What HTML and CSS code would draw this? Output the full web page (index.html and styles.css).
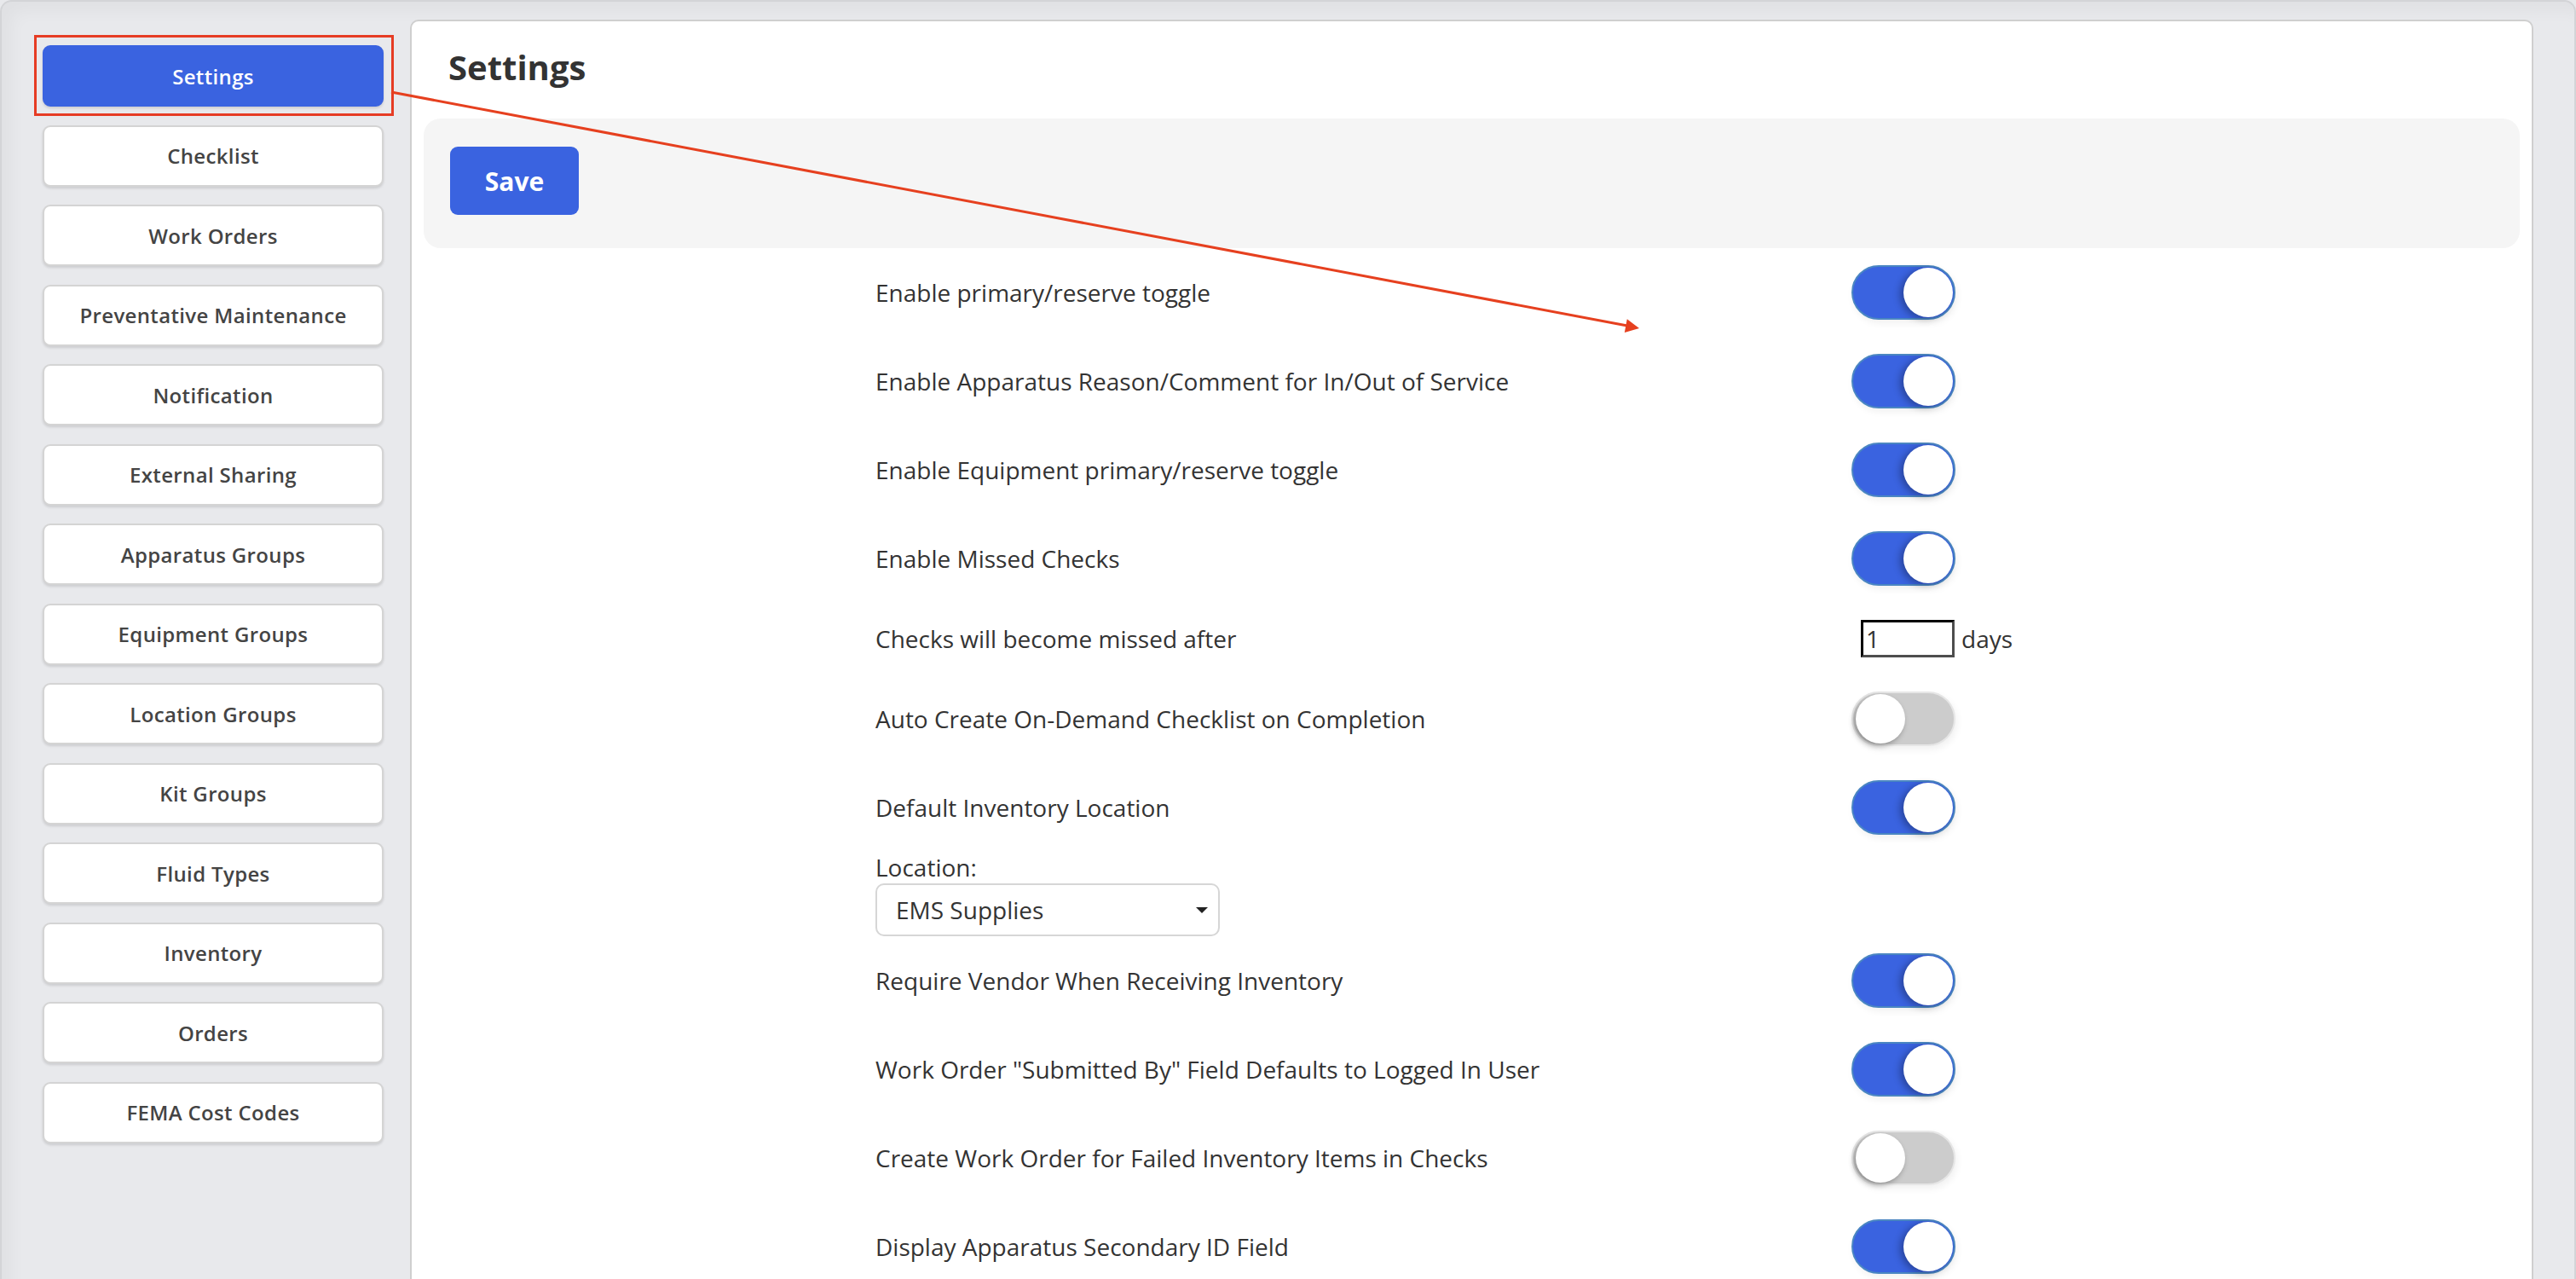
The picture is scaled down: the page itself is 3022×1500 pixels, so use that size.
FILE: index.html
```html
<!DOCTYPE html>
<html lang="en">
<head>
<meta charset="utf-8">
<title>Settings</title>
<link rel="stylesheet" href="styles.css">
</head>
<body>
<div class="app">
  <aside class="sidebar">
    <button class="nav-btn active">Settings</button>
    <button class="nav-btn">Checklist</button>
    <button class="nav-btn">Work Orders</button>
    <button class="nav-btn">Preventative Maintenance</button>
    <button class="nav-btn">Notification</button>
    <button class="nav-btn">External Sharing</button>
    <button class="nav-btn">Apparatus Groups</button>
    <button class="nav-btn">Equipment Groups</button>
    <button class="nav-btn">Location Groups</button>
    <button class="nav-btn">Kit Groups</button>
    <button class="nav-btn">Fluid Types</button>
    <button class="nav-btn">Inventory</button>
    <button class="nav-btn">Orders</button>
    <button class="nav-btn">FEMA Cost Codes</button>
  </aside>
  <main class="card">
    <h1 class="title">Settings</h1>
    <div class="toolbar">
      <button class="save">Save</button>
    </div>
    <div class="settings">
      <div class="row"><span class="label">Enable primary/reserve toggle</span><span class="toggle on"></span></div>
      <div class="row"><span class="label">Enable Apparatus Reason/Comment for In/Out of Service</span><span class="toggle on"></span></div>
      <div class="row"><span class="label">Enable Equipment primary/reserve toggle</span><span class="toggle on"></span></div>
      <div class="row"><span class="label">Enable Missed Checks</span><span class="toggle on"></span></div>
      <div class="row row-input"><span class="label">Checks will become missed after</span><span class="days"><input class="num" type="text" value="1"><span class="unit">days</span></span></div>
      <div class="row"><span class="label">Auto Create On-Demand Checklist on Completion</span><span class="toggle"></span></div>
      <div class="row"><span class="label">Default Inventory Location</span><span class="toggle on"></span></div>
      <div class="location">
        <div class="loc-label">Location:</div>
        <div class="select"><span>EMS Supplies</span><span class="caret"></span></div>
      </div>
      <div class="row"><span class="label">Require Vendor When Receiving Inventory</span><span class="toggle on"></span></div>
      <div class="row"><span class="label">Work Order "Submitted By" Field Defaults to Logged In User</span><span class="toggle on"></span></div>
      <div class="row"><span class="label">Create Work Order for Failed Inventory Items in Checks</span><span class="toggle"></span></div>
      <div class="row"><span class="label">Display Apparatus Secondary ID Field</span><span class="toggle on"></span></div>
    </div>
  </main>
</div>
<div class="annot-box"></div>
<svg class="annot-arrow" width="3022" height="1500" viewBox="0 0 3022 1500">
  <line x1="459" y1="108" x2="1909" y2="382" stroke="#e6401f" stroke-width="3"/>
  <polygon points="1923,385 1905.8,390 1908.8,374.2" fill="#e6401f"/>
</svg>
</body>
</html>
```

FILE: styles.css
```css
html, body {
  margin: 0;
  padding: 0;
  height: 1500px;
  overflow: hidden;
  background: #e8e9ec;
  font-family: "Open Sans", "Liberation Sans", sans-serif;
}

.app {
  display: flex;
  align-items: flex-start;
  min-height: 1600px;
  border: 2px solid #d3d4d7;
  border-bottom: none;
  border-radius: 14px 14px 0 0;
  box-shadow: inset 12px 12px 18px rgba(0, 0, 0, 0.035);
  box-sizing: border-box;
}

.sidebar {
  flex: 0 0 400px;
  margin: 0 31px 0 48px;
  padding-top: 51px;
  display: flex;
  flex-direction: column;
  gap: 21.5px;
}

.nav-btn {
  height: 72px;
  box-sizing: border-box;
  background: #fff;
  border: 2px solid #d4d4d4;
  border-radius: 9px;
  box-shadow: 0 2px 3px rgba(0, 0, 0, 0.12);
  font-family: "Open Sans", sans-serif;
  font-weight: 600;
  font-size: 24px;
  letter-spacing: 0.35px;
  color: #444;
  padding: 0;
}

.nav-btn.active {
  background: #3a63e0;
  border-color: #3a63e0;
  color: #fff;
}

.card {
  flex: 1;
  margin: 21px 48px 0 0;
  min-height: 1600px;
  background: #fff;
  border: 2px solid #cfcfcf;
  border-radius: 10px;
}

.title {
  margin: 0;
  padding: 30px 43px 0;
  font-size: 40px;
  line-height: 48px;
  font-weight: 700;
  color: #333;
}

.toolbar {
  margin: 36px 14px 0;
  padding: 33px 31px 39px;
  background: #f5f5f5;
  border-radius: 20px;
}

.save {
  width: 151px;
  height: 80px;
  background: #3a63e0;
  border: none;
  border-radius: 9px;
  color: #fff;
  font-family: "Open Sans", sans-serif;
  font-weight: 700;
  font-size: 30px;
  padding: 0;
}

.settings {
  width: 1399px;
  margin: 0 auto;
}

.row {
  display: grid;
  grid-template-columns: 1145px auto;
  align-items: center;
  padding: 20px 0;
}

.label, .loc-label, .unit, .select {
  font-size: 28px;
  color: #333;
}

.toggle {
  position: relative;
  width: 122px;
  height: 64px;
  box-sizing: border-box;
  border-radius: 32px;
  border: 2px solid #e6e6e6;
  background: #ccc;
  box-shadow: 2px 4px 8px rgba(0, 0, 0, 0.06);
}

.toggle::after {
  content: "";
  position: absolute;
  top: 1px;
  left: 3px;
  width: 58px;
  height: 58px;
  border-radius: 50%;
  background: #fff;
  box-shadow: -2px 3px 6px rgba(0, 0, 0, 0.3);
}

.toggle.on {
  background: #3a63e0;
  border-color: #4a86c2;
}

.toggle.on::after {
  left: 59px;
  box-shadow: -4px 2px 8px rgba(0, 0, 0, 0.3);
}

.days {
  display: flex;
  align-items: center;
  gap: 8px;
  margin-left: 11px;
}

.num {
  width: 110px;
  height: 44px;
  box-sizing: border-box;
  border: 3px solid;
  border-color: #000 #4d4d4d #4d4d4d #000;
  font-family: "Open Sans", sans-serif;
  font-size: 28px;
  color: #333;
  padding: 0 3px;
  margin: 0;
}

.loc-label {
  line-height: 37px;
}

.select {
  width: 404px;
  height: 62px;
  box-sizing: border-box;
  border: 2px solid #d6d6d6;
  border-radius: 10px;
  display: flex;
  align-items: center;
  justify-content: space-between;
  padding: 0 12px 0 22px;
}

.caret {
  width: 0;
  height: 0;
  border-left: 7px solid transparent;
  border-right: 7px solid transparent;
  border-top: 7px solid #222;
}

.annot-box {
  position: absolute;
  left: 40px;
  top: 41px;
  width: 422px;
  height: 95px;
  box-sizing: border-box;
  border: 3px solid #e63c24;
}

.annot-arrow {
  position: absolute;
  left: 0;
  top: 0;
  pointer-events: none;
}
```
